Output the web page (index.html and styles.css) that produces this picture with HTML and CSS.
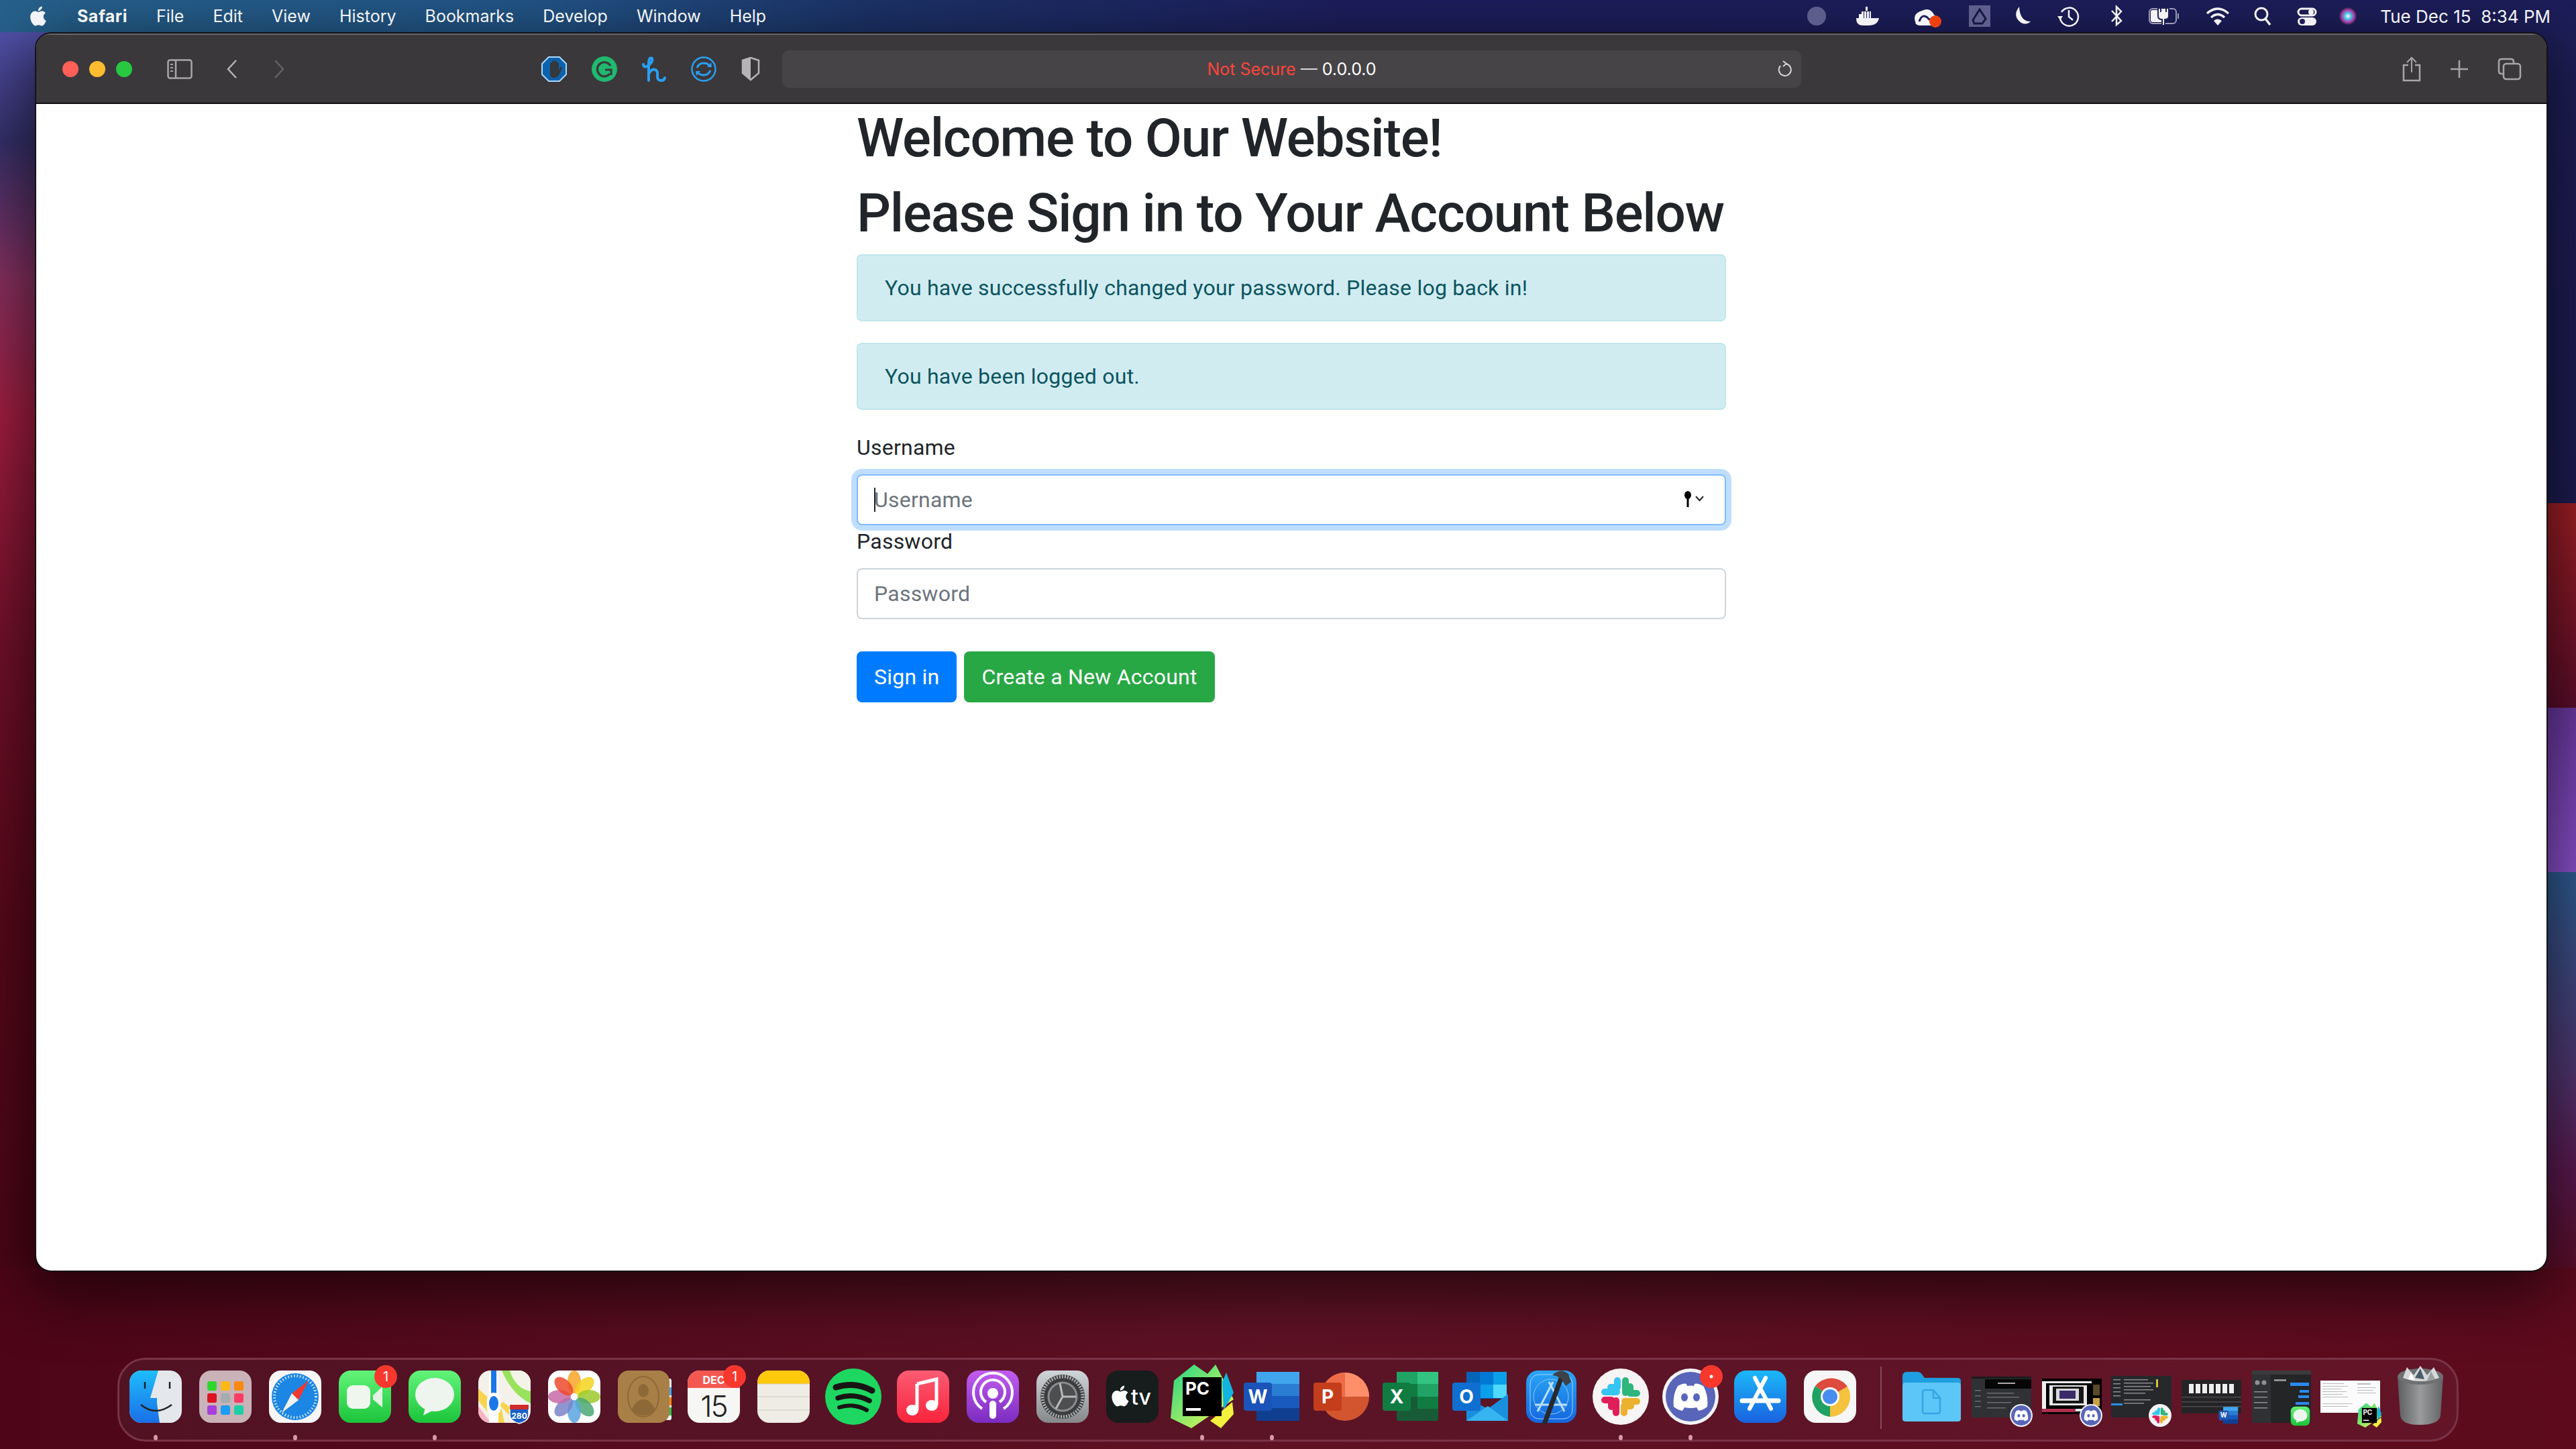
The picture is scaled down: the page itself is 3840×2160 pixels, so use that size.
FILE: index.html
```html
<!DOCTYPE html>
<html lang="en">
<head>
  <meta charset="UTF-8" />
  <title>Safari - Sign in</title>
  <link rel="stylesheet" href="styles.css">
</head>
<body>

  <!-- shared gradients, clips and the app icons used more than once -->
  <svg class="defs" xmlns="http://www.w3.org/2000/svg">
    <defs>
      <clipPath id="sq"><rect x="13" y="13" width="78" height="78" rx="18"/></clipPath>
      <linearGradient id="g-green" x1="0" y1="0" x2="0" y2="1"><stop offset="0" stop-color="#63f47a"/><stop offset="1" stop-color="#1bc43a"/></linearGradient>
      <linearGradient id="g-finder" x1="0" y1="0" x2="0" y2="1"><stop offset="0" stop-color="#1ebdfb"/><stop offset="1" stop-color="#1a6fe8"/></linearGradient>
      <linearGradient id="g-music" x1="0" y1="0" x2="0" y2="1"><stop offset="0" stop-color="#fb5c74"/><stop offset="1" stop-color="#fa233b"/></linearGradient>
      <linearGradient id="g-pod" x1="0" y1="0" x2="0" y2="1"><stop offset="0" stop-color="#c25cf0"/><stop offset="1" stop-color="#7b2cbf"/></linearGradient>
      <linearGradient id="g-gray" x1="0" y1="0" x2="0" y2="1"><stop offset="0" stop-color="#cfd6da"/><stop offset="1" stop-color="#86888a"/></linearGradient>
      <linearGradient id="g-store" x1="0" y1="0" x2="0" y2="1"><stop offset="0" stop-color="#1bb8f8"/><stop offset="1" stop-color="#1a62e0"/></linearGradient>
      <linearGradient id="g-xcode" x1="0" y1="0" x2="0" y2="1"><stop offset="0" stop-color="#2aa6f5"/><stop offset="1" stop-color="#1565df"/></linearGradient>
      <linearGradient id="g-pc1" x1="0" y1="0" x2="1" y2="1"><stop offset="0" stop-color="#21d789"/><stop offset="1" stop-color="#fcf84a"/></linearGradient>
      <linearGradient id="g-trash" x1="0" y1="0" x2="1" y2="0"><stop offset="0" stop-color="#5c5d5f"/><stop offset=".5" stop-color="#9a9b9d"/><stop offset="1" stop-color="#626365"/></linearGradient>
      <radialGradient id="g-siri"><stop offset="0" stop-color="#ffffff"/><stop offset=".35" stop-color="#45c7e8"/><stop offset=".7" stop-color="#b03da8"/><stop offset="1" stop-color="#2b2350"/></radialGradient>

      <symbol id="ic-messages" viewBox="0 0 104 104">
        <rect x="13" y="13" width="78" height="78" rx="18" fill="url(#g-green)"/>
        <ellipse cx="52" cy="49" rx="29" ry="25" fill="#eef5ee"/>
        <path d="M38 68 L35 80 L50 72 Z" fill="#eef5ee"/>
      </symbol>
      <symbol id="ic-discord" viewBox="0 0 104 104">
        <circle cx="52" cy="52" r="42" fill="#f4f4f6"/>
        <circle cx="52" cy="52" r="37" fill="#5865b8"/>
        <path d="M33 36 Q42 31 46 33 L47 36 Q52 35 57 36 L58 33 Q62 31 71 36 Q79 50 77 67 Q71 72 64 73 L61 68 Q52 70 43 68 L40 73 Q33 72 27 67 Q25 50 33 36 Z" fill="#fff"/>
        <ellipse cx="43" cy="53" rx="5" ry="6" fill="#5865b8"/>
        <ellipse cx="61" cy="53" rx="5" ry="6" fill="#5865b8"/>
      </symbol>
      <symbol id="ic-slack" viewBox="0 0 104 104">
        <circle cx="52" cy="52" r="42" fill="#f6f4f4"/>
        <g fill="none" stroke-width="10" stroke-linecap="round">
          <path d="M47 28 V38 H37" stroke="#36c5f0" stroke-linejoin="round"/><path d="M28 45 H46" stroke="#36c5f0"/>
          <path d="M76 47 H66 V37" stroke="#2eb67d" stroke-linejoin="round"/><path d="M59 28 V46" stroke="#2eb67d"/>
          <path d="M57 76 V66 H67" stroke="#ecb22e" stroke-linejoin="round"/><path d="M76 59 H58" stroke="#ecb22e"/>
          <path d="M28 57 H38 V67" stroke="#e01e5a" stroke-linejoin="round"/><path d="M45 76 V58" stroke="#e01e5a"/>
        </g>
      </symbol>
      <symbol id="ic-word" viewBox="0 0 104 104">
        <rect x="29" y="15" width="64" height="19" fill="#41a5ee"/>
        <rect x="29" y="33" width="64" height="19" fill="#2b7cd3"/>
        <rect x="29" y="51" width="64" height="19" fill="#185abd"/>
        <rect x="29" y="69" width="64" height="19" fill="#103f91"/>
        <rect x="10" y="31" width="42" height="42" rx="4" fill="#1b54b8"/>
        <text x="31" y="62" class="office-letter">W</text>
      </symbol>
      <symbol id="ic-pycharm" viewBox="0 0 104 104">
        <path d="M5 84 L36 99 L99 56 L72 4 L60 18 L40 4 L10 28 Z" fill="url(#g-pc1)"/>
        <path d="M99 46 L88 16 L82 30 L84 72 Z" fill="#12b4e0"/>
        <path d="M64 88 L80 99 L99 78 L97 60 Z" fill="#f4f03e"/>
        <rect x="23" y="23" width="58" height="58" fill="#000"/>
        <text x="27" y="49" class="pc-letter">PC</text>
        <rect x="28" y="69" width="22" height="4" fill="#fff"/>
      </symbol>
    </defs>
  </svg>

  <header class="menubar">
    <nav class="menu-left">
      <svg class="apple" width="30" height="32" viewBox="2 1 20 22"><path fill="#f2f4f7" d="M18.71 19.5c-.83 1.24-1.71 2.45-3.05 2.47-1.34.03-1.77-.79-3.29-.79-1.53 0-2 .77-3.27.82-1.31.05-2.3-1.32-3.14-2.53C4.25 17 2.94 12.45 4.7 9.39c.87-1.52 2.43-2.48 4.12-2.51 1.28-.02 2.5.87 3.29.87.78 0 2.26-1.07 3.8-.91.65.03 2.47.26 3.64 1.98-.09.06-2.17 1.28-2.15 3.81.03 3.02 2.65 4.03 2.68 4.04-.03.07-.42 1.44-1.38 2.83M13 3.5c.73-.83 1.94-1.46 2.94-1.5.13 1.17-.34 2.35-1.04 3.19-.69.85-1.83 1.51-2.95 1.42-.15-1.15.41-2.35 1.05-3.11z"/></svg>
      <span class="menu-app">Safari</span>
      <span>File</span>
      <span>Edit</span>
      <span>View</span>
      <span>History</span>
      <span>Bookmarks</span>
      <span>Develop</span>
      <span>Window</span>
      <span>Help</span>
    </nav>
    <div class="menu-right">
      <svg width="74" height="48"><circle cx="37" cy="24" r="14" fill="#5d5d8c"/></svg>
      <svg width="76" height="48"><g fill="#f2f2f4"><rect x="36" y="10" width="3" height="6"/><rect x="30" y="17" width="14" height="10"/><rect x="26" y="21" width="4" height="6"/><path d="M22 27 H56 Q54 38 40 38 H32 Q22 38 22 27 Z"/></g><g fill="#1d1f5b"><rect x="33" y="17" width="1" height="10"/><rect x="37" y="17" width="1" height="10"/><rect x="41" y="17" width="1" height="10"/></g></svg>
      <svg width="104" height="48"><path d="M34 32 Q30 20 44 16 Q56 10 62 22 Q72 28 62 38 H42 Q34 38 34 32 Z" fill="#f4f4f6"/><path d="M40 32 Q44 20 52 26 Q56 32 62 28" fill="none" stroke="#1d1f5b" stroke-width="3"/><circle cx="64" cy="32" r="9" fill="#f0410d"/></svg>
      <svg width="52" height="48"><rect x="10" y="8" width="32" height="32" fill="#5f5f8e"/><path d="M26 14 L35 28 L30 35 H18 L16 30 Z" fill="none" stroke="#16183f" stroke-width="3"/></svg>
      <svg width="74" height="48"><path d="M33 10 Q22 24 36 34 Q44 38 50 32 Q34 32 33 10 Z" fill="#f2f2f4"/></svg>
      <svg width="66" height="48"><path d="M22 18 A13.500 13.500 0 1 1 20 26" fill="none" stroke="#f2f2f4" stroke-width="2.500"/><path d="M16 24 L24 24 L20 30 Z" fill="#f2f2f4"/><path d="M33 15 V25 L39 30" fill="none" stroke="#f2f2f4" stroke-width="2.500"/></svg>
      <svg width="76" height="48"><path d="M31 16 L45 31 L38 37 V10 L45 17 L31 32" fill="none" stroke="#f2f2f4" stroke-width="2.500"/></svg>
      <svg width="66" height="48"><rect x="11" y="13" width="40" height="22" rx="5" fill="none" stroke="#9b9bb8" stroke-width="2"/><rect x="13" y="15" width="22" height="18" rx="3" fill="#f2f2f4"/><rect x="53" y="20" width="2" height="8" fill="#9b9bb8"/><path d="M24 12 H40 V24 Q40 29 34 29 V38 H30 V29 Q24 29 24 24 Z M28 11 V18 M36 11 V18" fill="#f2f2f4" stroke="#1d1f5b" stroke-width="2"/></svg>
      <svg width="94" height="48"><g fill="none" stroke="#f2f2f4" stroke-width="3.500"><path d="M31 20 Q47 6 63 20"/><path d="M37 26 Q47 17 57 26"/></g><path d="M41 31 Q47 26 53 31 L47 38 Z" fill="#f2f2f4"/></svg>
      <svg width="40" height="48"><circle cx="18" cy="21" r="9" fill="none" stroke="#f2f2f4" stroke-width="3"/><path d="M24 28 L31 37" stroke="#f2f2f4" stroke-width="3.500"/></svg>
      <svg width="92" height="48"><rect x="33" y="13" width="26" height="10" rx="5" fill="none" stroke="#f2f2f4" stroke-width="3"/><circle cx="52" cy="18" r="4" fill="#f2f2f4"/><rect x="32" y="26" width="28" height="12" rx="6" fill="#f2f2f4"/><circle cx="39" cy="32" r="4" fill="#1d1f5b"/></svg>
      <svg width="30" height="48"><circle cx="15" cy="24" r="13" fill="url(#g-siri)"/></svg>
      <span class="clock">Tue Dec 15  8:34 PM</span>
    </div>
  </header>

  <main class="window">
    <div class="toolbar">
      <span class="light light-red"></span>
      <span class="light light-yellow"></span>
      <span class="light light-green"></span>
      <svg class="tb-sidebar" width="38" height="30" viewBox="0 0 38 30"><rect x="1.500" y="1.500" width="35" height="27" rx="3" fill="none" stroke="#a8a6a8" stroke-width="2.500"/><path d="M13 2 V28" stroke="#a8a6a8" stroke-width="2.500"/><path d="M5 8 H9 M5 13 H9 M5 18 H9" stroke="#a8a6a8" stroke-width="2"/></svg>
      <svg class="tb-back" width="18" height="30" viewBox="0 0 18 30"><path d="M15 2 L3 15 L15 28" fill="none" stroke="#b4b2b4" stroke-width="2.500"/></svg>
      <svg class="tb-forward" width="18" height="30" viewBox="0 0 18 30"><path d="M3 2 L15 15 L3 28" fill="none" stroke="#646264" stroke-width="2.500"/></svg>

      <svg class="ext ext-first" width="38" height="38" viewBox="0 0 38 38"><path d="M11 1 H27 L37 11 V27 L27 37 H11 L1 27 V11 Z" fill="#0d62ad" stroke="#a9d8f7" stroke-width="2"/><path d="M13 20 V11 Q13 9 14.500 9 Q16 9 16 11 V8 Q16 6 17.500 6 Q19 6 19.500 8 Q20 6 21.500 6 Q23 6 23 8 V10 Q23 9 24.500 9 Q26 9 26 11 V20 L29 16 Q31 15 31 18 L26 28 Q24 32 19 32 Q13 32 13 26 Z" fill="#35383c"/></svg>
      <svg class="ext" width="38" height="38" viewBox="0 0 38 38"><circle cx="19" cy="19" r="19" fill="#1fb96f"/><path d="M28 14 A10.500 10.500 0 1 0 27 26 M20 20 H29 V28" fill="none" stroke="#3a383b" stroke-width="3.200"/></svg>
      <svg class="ext" width="36" height="38" viewBox="0 0 36 38"><path d="M2 12 Q3 18 9 14 Q17 8 15 3 Q10 0 10 12 L10 36 M10 26 Q14 18 20 20 Q24 22 23 28 Q22 36 29 36 Q33 36 34 32" fill="none" stroke="#2a9ff2" stroke-width="4" stroke-linecap="round"/></svg>
      <svg class="ext" width="38" height="38" viewBox="0 0 38 38"><circle cx="19" cy="19" r="17.500" fill="none" stroke="#2a9ff2" stroke-width="2.500"/><path d="M9 17 Q12 10 19 10 Q24 10 27 13 M29 21 Q26 28 19 28 Q14 28 11 25" fill="none" stroke="#2a9ff2" stroke-width="3"/><path d="M24 16 L31 16 L30 9 Z M14 22 L7 22 L8 29 Z" fill="#2a9ff2"/></svg>
      <svg class="ext" width="28" height="36" viewBox="0 0 28 36"><path d="M14 1 L26 5 V24 L14 34 L2 24 V5 Z" fill="none" stroke="#b6b4b7" stroke-width="2.500"/><path d="M14 1 L2 5 V24 L14 34 Z" fill="#b6b4b7"/></svg>

      <div class="address">
        <span class="address-text"><span class="address-warn">Not Secure</span><span class="address-dash"> — </span>0.0.0.0</span>
        <svg class="reload" width="24" height="28" viewBox="0 0 24 28"><path d="M15 6 A9 9 0 1 1 7 9" fill="none" stroke="#d8d6d8" stroke-width="2"/><path d="M11 2 L16 6 L11 10" fill="none" stroke="#d8d6d8" stroke-width="2"/></svg>
      </div>

      <svg class="tb-share" width="30" height="38" viewBox="0 0 30 38"><path d="M10 13 H3 V36 H27 V13 H20" fill="none" stroke="#a8a6a8" stroke-width="2.500"/><path d="M15 24 V2 M8 9 L15 2 L22 9" fill="none" stroke="#a8a6a8" stroke-width="2"/></svg>
      <svg class="tb-plus" width="28" height="28" viewBox="0 0 28 28"><path d="M14 1 V27 M1 14 H27" stroke="#a8a6a8" stroke-width="2.500"/></svg>
      <svg class="tb-tabs" width="36" height="34" viewBox="0 0 36 34"><rect x="9" y="9" width="25" height="23" rx="4" fill="none" stroke="#a8a6a8" stroke-width="2.500"/><path d="M9 24 H6 Q2 24 2 20 V6 Q2 2 6 2 H20 Q24 2 24 6 V9" fill="none" stroke="#a8a6a8" stroke-width="2.500"/></svg>
    </div>

    <div class="page">
      <div class="content">
        <h1>Welcome to Our Website!</h1>
        <h1>Please Sign in to Your Account Below</h1>
        <div class="alert">You have successfully changed your password. Please log back in!</div>
        <div class="alert">You have been logged out.</div>
        <form>
          <label for="username">Username</label>
          <div class="field">
            <input class="form-control is-focused" id="username" type="text" placeholder="Username">
            <span class="caret"></span>
            <svg class="keychain" width="32" height="26" viewBox="0 0 32 26"><ellipse cx="6" cy="7" rx="5" ry="6" fill="#000"/><path d="M6 12 V25" stroke="#000" stroke-width="3"/><path d="M18 9 L23.500 15 L29 9" fill="none" stroke="#222" stroke-width="2"/></svg>
          </div>
          <label for="password">Password</label>
          <input class="form-control" id="password" type="password" placeholder="Password">
          <div class="buttons">
            <button class="btn btn-primary" type="button">Sign in</button>
            <button class="btn btn-success" type="button">Create a New Account</button>
          </div>
        </form>
      </div>
    </div>
  </main>

  <footer class="dock">
    <div class="dock-item has-dot"><svg width="104" height="104" viewBox="0 0 104 104"><g clip-path="url(#sq)"><rect x="13" y="13" width="78" height="78" fill="#e4e8ec"/><path d="M13 13 H56 Q48 40 44 54 H54 V62 Q56 76 58 91 H13 Z" fill="url(#g-finder)"/></g><path d="M36 30 V40 M73 30 V40" stroke="#222" stroke-width="2.500"/><path d="M30 64 Q52 82 76 64" fill="none" stroke="#222" stroke-width="2.500"/></svg></div>
    <div class="dock-item"><svg width="104" height="104" viewBox="0 0 104 104"><rect x="13" y="13" width="78" height="78" rx="18" fill="#c9b3b8"/><rect x="25" y="29" width="14" height="14" rx="3" fill="#2fd62f"/><rect x="45" y="29" width="14" height="14" rx="3" fill="#fdb913"/><rect x="65" y="29" width="14" height="14" rx="3" fill="#f78a0f"/><rect x="25" y="47" width="14" height="14" rx="3" fill="#dc1420"/><rect x="45" y="47" width="14" height="14" rx="3" fill="#a4acb0"/><rect x="65" y="47" width="14" height="14" rx="3" fill="#fa3c64"/><rect x="25" y="65" width="14" height="14" rx="3" fill="#a63fdc"/><rect x="45" y="65" width="14" height="14" rx="3" fill="#1b9cf5"/><rect x="65" y="65" width="14" height="14" rx="3" fill="#1ccfa4"/></svg></div>
    <div class="dock-item has-dot"><svg width="104" height="104" viewBox="0 0 104 104"><rect x="13" y="13" width="78" height="78" rx="18" fill="#f6f6f6"/><circle cx="52" cy="52" r="35" fill="#1c86e4"/><circle cx="52" cy="52" r="31" fill="none" stroke="#d6ecfb" stroke-width="4" stroke-dasharray="1.500 3"/><path d="M72 28 L57 57 L47 47 Z" fill="#f0392b"/><path d="M32 76 L47 47 L57 57 Z" fill="#f2f2f2"/></svg></div>
    <div class="dock-item"><svg width="104" height="104" viewBox="0 0 104 104"><rect x="13" y="13" width="78" height="78" rx="18" fill="url(#g-green)"/><rect x="25" y="35" width="35" height="35" rx="9" fill="#eef6ee"/><path d="M64 50 L78 37 V68 L64 56 Z" fill="#e4f2e4"/><circle cx="83" cy="22" r="17" fill="#f8382d"/><text x="83" y="29" class="badge-text">1</text></svg></div>
    <div class="dock-item has-dot"><svg width="104" height="104"><use href="#ic-messages" width="104" height="104"/></svg></div>
    <div class="dock-item"><svg width="104" height="104" viewBox="0 0 104 104"><g clip-path="url(#sq)"><rect x="13" y="13" width="78" height="78" fill="#f4f1ea"/><path d="M48 13 H91 V62 Q64 50 48 13 Z" fill="#98e25c"/><path d="M60 13 H91 V44 Q68 40 60 13 Z" fill="#f3f3e8"/><path d="M13 40 L48 72 L52 91 H40 L13 58 Z" fill="#f9d54e"/><path d="M13 66 L32 91 H13 Z" fill="#f7b4c2"/><path d="M50 60 L91 91 H70 L44 64 Z" fill="#f9d54e"/><rect x="29" y="13" width="14" height="78" fill="#fff"/><rect x="32" y="13" width="8" height="38" fill="#1a77e6"/><rect x="26" y="46" width="20" height="34" rx="10" fill="#fff"/><ellipse cx="36" cy="62" rx="7" ry="11" fill="#1a77e6"/></g><path d="M60 64 H88 V80 Q88 88 74 92 Q60 88 60 80 Z" fill="#1a61c7" stroke="#fff" stroke-width="1.500"/><rect x="60" y="64" width="28" height="7" fill="#cf2b2b"/><text x="74" y="85" class="maps-shield">280</text></svg></div>
    <div class="dock-item"><svg width="104" height="104" viewBox="0 0 104 104"><rect x="13" y="13" width="78" height="78" rx="18" fill="#fff"/><g transform="translate(52 52)" fill-opacity=".85"><ellipse cy="-22" rx="10" ry="17" fill="#f7a428"/><ellipse cy="-22" rx="10" ry="17" fill="#f4d21e" transform="rotate(45)"/><ellipse cy="-22" rx="10" ry="17" fill="#9cc92d" transform="rotate(90)"/><ellipse cy="-22" rx="10" ry="17" fill="#4aa873" transform="rotate(135)"/><ellipse cy="-22" rx="10" ry="17" fill="#5ba5e0" transform="rotate(180)"/><ellipse cy="-22" rx="10" ry="17" fill="#7a82c8" transform="rotate(225)"/><ellipse cy="-22" rx="10" ry="17" fill="#c76aa8" transform="rotate(270)"/><ellipse cy="-22" rx="10" ry="17" fill="#ee4a2c" transform="rotate(315)"/></g></svg></div>
    <div class="dock-item"><svg width="104" height="104" viewBox="0 0 104 104"><rect x="84" y="25" width="9" height="62" rx="3" fill="#f2f2f2"/><rect x="86" y="38" width="7" height="12" fill="#3fa9f5"/><rect x="86" y="53" width="7" height="12" fill="#f78a0f"/><rect x="86" y="68" width="7" height="12" fill="#2fc04a"/><rect x="13" y="13" width="77" height="78" rx="16" fill="#a97f48"/><ellipse cx="51" cy="52" rx="23" ry="30" fill="none" stroke="#8d6938" stroke-width="2"/><ellipse cx="51" cy="43" rx="8" ry="10" fill="#8d6938"/><path d="M33 72 Q40 56 51 56 Q62 56 69 72 Q51 88 33 72 Z" fill="#8d6938"/></svg></div>
    <div class="dock-item"><svg width="104" height="104" viewBox="0 0 104 104"><g clip-path="url(#sq)"><rect x="13" y="13" width="78" height="78" fill="#f6f6f4"/><rect x="13" y="13" width="78" height="26" fill="#f25850"/></g><text x="52" y="33" class="cal-month">DEC</text><text x="52" y="82" class="cal-day">15</text><circle cx="83" cy="22" r="17" fill="#f8382d"/><text x="83" y="29" class="badge-text">1</text></svg></div>
    <div class="dock-item"><svg width="104" height="104" viewBox="0 0 104 104"><g clip-path="url(#sq)"><rect x="13" y="13" width="78" height="78" fill="#eeece4"/><rect x="13" y="13" width="78" height="20" fill="#fec90a"/><path d="M13 33 H91" stroke="#cfcdc4" stroke-width="2" stroke-dasharray="1.500 2"/><path d="M13 52 H91 M13 72 H91" stroke="#d8d6cf" stroke-width="1.500"/></g></svg></div>
    <div class="dock-item"><svg width="104" height="104" viewBox="0 0 104 104"><circle cx="52" cy="52" r="42" fill="#1ed760"/><g fill="none" stroke="#191414" stroke-linecap="round"><path d="M26 38 Q54 29 80 43" stroke-width="9"/><path d="M29 54 Q53 46 76 58" stroke-width="7.500"/><path d="M31 68 Q52 61 72 72" stroke-width="6"/></g></svg></div>
    <div class="dock-item"><svg width="104" height="104" viewBox="0 0 104 104"><rect x="13" y="13" width="78" height="78" rx="18" fill="url(#g-music)"/><path d="M43 33 L72 26 V65 M43 33 V72" fill="none" stroke="#fff" stroke-width="5"/><ellipse cx="36" cy="72" rx="9" ry="8" fill="#fff"/><ellipse cx="65" cy="65" rx="9" ry="8" fill="#fff"/></svg></div>
    <div class="dock-item"><svg width="104" height="104" viewBox="0 0 104 104"><rect x="13" y="13" width="78" height="78" rx="18" fill="url(#g-pod)"/><g fill="none" stroke="#fff" stroke-width="4"><path d="M36 70 A29 29 0 1 1 68 70"/><path d="M42 60 A18 18 0 1 1 62 60"/></g><circle cx="52" cy="47" r="8" fill="#fff"/><rect x="47" y="58" width="10" height="27" rx="5" fill="#fff"/></svg></div>
    <div class="dock-item"><svg width="104" height="104" viewBox="0 0 104 104"><rect x="13" y="13" width="78" height="78" rx="18" fill="url(#g-gray)"/><circle cx="52" cy="52" r="33" fill="#3c3d3f"/><circle cx="52" cy="52" r="30" fill="none" stroke="#b0b2b4" stroke-width="5" stroke-dasharray="2 2"/><circle cx="52" cy="52" r="21" fill="#4d4e50" stroke="#8a8c8e" stroke-width="3"/><path d="M52 52 L48 32 M52 52 L72 52 M52 52 L42 70" stroke="#b8babc" stroke-width="3"/></svg></div>
    <div class="dock-item"><svg width="104" height="104" viewBox="0 0 104 104"><rect x="13" y="13" width="78" height="78" rx="18" fill="#171c1c"/><svg x="19" y="34" width="30" height="34" viewBox="3 1 18 22"><path fill="#fff" d="M18.71 19.5c-.83 1.24-1.71 2.45-3.05 2.47-1.34.03-1.77-.79-3.29-.79-1.53 0-2 .77-3.27.82-1.31.05-2.3-1.32-3.14-2.53C4.25 17 2.94 12.45 4.7 9.39c.87-1.52 2.43-2.48 4.12-2.51 1.28-.02 2.5.87 3.29.87.78 0 2.26-1.07 3.8-.91.65.03 2.47.26 3.64 1.98-.09.06-2.17 1.28-2.15 3.81.03 3.02 2.65 4.03 2.68 4.04-.03.07-.42 1.44-1.38 2.83M13 3.5c.73-.83 1.94-1.46 2.94-1.5.13 1.17-.34 2.35-1.04 3.19-.69.85-1.83 1.51-2.95 1.42-.15-1.15.41-2.35 1.05-3.11z"/></svg><text x="50" y="64" class="tv-text">tv</text></svg></div>
    <div class="dock-item has-dot"><svg width="104" height="104"><use href="#ic-pycharm" width="104" height="104"/></svg></div>
    <div class="dock-item has-dot"><svg width="104" height="104"><use href="#ic-word" width="104" height="104"/></svg></div>
    <div class="dock-item"><svg width="104" height="104" viewBox="0 0 104 104"><circle cx="57" cy="52" r="36" fill="#d2552f"/><path d="M57 16 A36 36 0 0 1 93 52 H57 Z" fill="#ff8f6b"/><path d="M57 16 A36 36 0 0 0 26 34 V52 H57 Z" fill="#ed6c47"/><rect x="10" y="31" width="42" height="42" rx="4" fill="#c43e1c"/><text x="31" y="62" class="office-letter">P</text></svg></div>
    <div class="dock-item"><svg width="104" height="104" viewBox="0 0 104 104"><rect x="30" y="15" width="62" height="73" rx="3" fill="#185c37"/><rect x="30" y="15" width="31" height="18" fill="#21a366"/><rect x="61" y="15" width="31" height="18" fill="#33c481"/><rect x="30" y="33" width="31" height="19" fill="#107c41"/><rect x="61" y="33" width="31" height="19" fill="#21a366"/><rect x="61" y="52" width="31" height="18" fill="#107c41"/><rect x="9" y="31" width="42" height="42" rx="4" fill="#107c41"/><text x="30" y="62" class="office-letter">X</text></svg></div>
    <div class="dock-item"><svg width="104" height="104" viewBox="0 0 104 104"><rect x="30" y="15" width="58" height="40" fill="#0364b8"/><rect x="50" y="15" width="20" height="19" fill="#0078d4"/><rect x="70" y="15" width="20" height="19" fill="#0a9fe8"/><rect x="50" y="34" width="20" height="20" fill="#0a9fe8"/><rect x="70" y="34" width="20" height="20" fill="#50d9ff"/><path d="M30 54 L62 70 L92 48 V88 H30 Z" fill="#1a8fde"/><path d="M30 88 L62 66 L92 88 Z" fill="#35b4f0"/><rect x="9" y="31" width="42" height="42" rx="4" fill="#0f6fd1"/><text x="30" y="62" class="office-letter">O</text></svg></div>
    <div class="dock-item"><svg width="104" height="104" viewBox="0 0 104 104"><rect x="15" y="13" width="75" height="78" rx="18" fill="url(#g-xcode)"/><rect x="21" y="19" width="63" height="66" rx="13" fill="none" stroke="#9fd3f9" stroke-width="1"/><circle cx="52" cy="52" r="26" fill="none" stroke="#8cc8f6" stroke-width="1"/><path d="M32 74 L55 30 M72 74 L49 30 M28 64 H76" stroke="#b9dffb" stroke-width="3" fill="none"/><path d="M42 93 L68 22" stroke="#27292d" stroke-width="7"/><path d="M54 20 Q66 8 78 18 L82 30 L74 36 L68 26 Q60 20 54 20 Z" fill="#3e4146"/></svg></div>
    <div class="dock-item has-dot"><svg width="104" height="104"><use href="#ic-slack" width="104" height="104"/></svg></div>
    <div class="dock-item has-dot"><svg width="104" height="104"><use href="#ic-discord" width="104" height="104"/><circle cx="83" cy="22" r="17" fill="#f8382d"/><circle cx="83" cy="22" r="2.500" fill="#fff"/></svg></div>
    <div class="dock-item"><svg width="104" height="104" viewBox="0 0 104 104"><rect x="13" y="13" width="78" height="78" rx="18" fill="url(#g-store)"/><path d="M60 24 L36 70 M44 24 L68 70" stroke="#fff" stroke-width="6" stroke-linecap="round"/><path d="M25 58 H79" stroke="#fff" stroke-width="7" stroke-linecap="round"/></svg></div>
    <div class="dock-item"><svg width="104" height="104" viewBox="0 0 104 104"><rect x="13" y="13" width="78" height="78" rx="18" fill="#f6f6f6"/><path d="M52 52 L30 36 A30 30 0 0 1 78 37 Z" fill="#dd4b3e"/><path d="M52 52 L78 37 A30 30 0 0 1 52 82 Z" fill="#f4c23c"/><path d="M52 52 L52 82 A30 30 0 0 1 30 36 Z" fill="#1fa262"/><circle cx="52" cy="52" r="14" fill="#fff"/><circle cx="52" cy="52" r="11" fill="#4a8df0"/></svg></div>

    <div class="dock-divider"></div>

    <div class="dock-item"><svg width="104" height="104" viewBox="0 0 104 104"><path d="M8 22 Q8 15 15 15 H30 Q35 15 38 20 L41 24 H90 Q95 24 95 29 V40 H8 Z" fill="#1f9fe0"/><path d="M8 36 Q8 31 13 31 H90 Q95 31 95 36 V85 Q95 89 90 89 H13 Q8 89 8 85 Z" fill="#5cc6f8"/><path d="M42 42 H54 L64 54 V74 Q64 77 60 77 H42 Q38 77 38 74 V46 Q38 42 42 42 Z M54 42 V54 H64" fill="none" stroke="#37a4e4" stroke-width="2.500"/></svg></div>
    <div class="dock-item"><svg width="104" height="104" viewBox="0 0 104 104"><rect x="7" y="22" width="89" height="61" fill="#2f3134"/><rect x="7" y="22" width="89" height="3" fill="#1a1a1c"/><rect x="27" y="26" width="69" height="14" fill="#060607"/><rect x="46" y="31" width="26" height="2" fill="#aaa"/><g fill="#6a6c70"><rect x="12" y="42" width="9" height="1.500"/><rect x="12" y="50" width="9" height="1.500"/><rect x="12" y="58" width="9" height="1.500"/><rect x="12" y="66" width="9" height="1.500"/><rect x="30" y="46" width="40" height="1.500"/><rect x="30" y="52" width="48" height="1.500"/><rect x="30" y="60" width="36" height="1.500"/><rect x="30" y="68" width="28" height="1.500"/></g><use href="#ic-discord" x="60" y="59" width="42" height="42"/></svg></div>
    <div class="dock-item"><svg width="104" height="104" viewBox="0 0 104 104"><rect x="8" y="25" width="89" height="53" fill="#000"/><rect x="8" y="29" width="74" height="45" fill="#f0f0f0"/><rect x="14" y="32" width="68" height="38" fill="#000"/><rect x="19" y="35" width="56" height="30" fill="#e8e8e8"/><rect x="24" y="37" width="46" height="25" fill="#161618"/><rect x="29" y="40" width="34" height="18" fill="#d8d8d8"/><rect x="34" y="43" width="24" height="12" fill="#3a2a6a"/><rect x="84" y="34" width="10" height="16" fill="#5a4a2a"/><rect x="84" y="54" width="10" height="12" fill="#c8a040"/><rect x="8" y="70" width="50" height="5" fill="#b03050"/><use href="#ic-discord" x="60" y="59" width="42" height="42"/></svg></div>
    <div class="dock-item"><svg width="104" height="104" viewBox="0 0 104 104"><rect x="7" y="21" width="90" height="62" fill="#26282b"/><g fill="#8a8c90"><rect x="10" y="26" width="11" height="1.500"/><rect x="10" y="32" width="11" height="1.500"/><rect x="10" y="38" width="11" height="1.500"/><rect x="10" y="44" width="11" height="1.500"/><rect x="10" y="50" width="11" height="1.500"/><rect x="26" y="26" width="36" height="1.500"/><rect x="26" y="31" width="44" height="1.500"/><rect x="26" y="36" width="40" height="1.500"/><rect x="26" y="41" width="44" height="1.500"/><rect x="26" y="46" width="32" height="1.500"/><rect x="26" y="56" width="40" height="1.500"/><rect x="26" y="61" width="30" height="1.500"/></g><rect x="7" y="62" width="17" height="3" fill="#2a8fe6"/><rect x="74" y="26" width="3" height="12" fill="#d8c040"/><use href="#ic-slack" x="59" y="59" width="42" height="42"/></svg></div>
    <div class="dock-item"><svg width="104" height="104" viewBox="0 0 104 104"><rect x="8" y="27" width="89" height="50" fill="#242426"/><g fill="#eeeeee"><rect x="19" y="33" width="7" height="14"/><rect x="29" y="33" width="7" height="14"/><rect x="39" y="33" width="7" height="14"/><rect x="49" y="33" width="7" height="14"/><rect x="59" y="33" width="7" height="14"/><rect x="69" y="33" width="7" height="14"/><rect x="79" y="33" width="7" height="14"/></g><g fill="#4a4a4c"><rect x="8" y="52" width="89" height="1.500"/><rect x="8" y="59" width="89" height="1.500"/><rect x="8" y="66" width="89" height="1.500"/></g><use href="#ic-word" x="60" y="62" width="36" height="36"/></svg></div>
    <div class="dock-item"><svg width="104" height="104" viewBox="0 0 104 104"><rect x="9" y="13" width="88" height="78" fill="#242527"/><rect x="9" y="13" width="88" height="6" fill="#3a3b3d"/><rect x="9" y="19" width="28" height="72" fill="#303134"/><g fill="#8f8f92"><circle cx="17" cy="31" r="3.500"/><circle cx="27" cy="31" r="3.500"/><rect x="12" y="44" width="20" height="1.500"/><rect x="12" y="52" width="20" height="1.500"/><rect x="12" y="60" width="20" height="1.500"/><rect x="12" y="68" width="20" height="1.500"/><rect x="42" y="26" width="18" height="3"/></g><g fill="#2a8af0"><rect x="66" y="31" width="28" height="5"/><rect x="80" y="42" width="14" height="4"/><rect x="78" y="50" width="16" height="4"/><rect x="74" y="60" width="20" height="4"/></g><use href="#ic-messages" x="62" y="62" width="38" height="38"/></svg></div>
    <div class="dock-item"><svg width="104" height="104" viewBox="0 0 104 104"><rect x="7" y="28" width="89" height="48" fill="#fbfbfb"/><g fill="#b8bcc0"><rect x="10" y="32" width="32" height="1"/><rect x="10" y="36" width="38" height="1"/><rect x="10" y="40" width="28" height="1"/><rect x="10" y="44" width="36" height="1"/><rect x="10" y="48" width="30" height="1"/><rect x="10" y="52" width="38" height="1"/><rect x="62" y="32" width="20" height="2"/><rect x="62" y="38" width="28" height="1"/><rect x="62" y="42" width="24" height="1"/><rect x="62" y="46" width="28" height="1"/><rect x="10" y="62" width="45" height="1"/><rect x="10" y="66" width="38" height="1"/></g><use href="#ic-pycharm" x="60" y="59" width="40" height="42"/></svg></div>
    <div class="dock-item"><svg width="104" height="104" viewBox="0 0 104 104"><path d="M18 22 L22 80 Q24 94 50 94 Q80 94 82 80 L86 22 Z" fill="url(#g-trash)"/><ellipse cx="52" cy="22" rx="34" ry="12" fill="#6e7072"/><path d="M26 24 L32 8 L42 20 L52 6 L62 20 L72 8 L80 24 Q52 34 26 24 Z" fill="#d6d8da"/><path d="M44 24 L52 10 L58 26 Z" fill="#4a5a68"/><path d="M34 26 L38 16 L44 28 Z" fill="#fff"/><path d="M62 28 L68 14 L74 26 Z" fill="#9aa0a6"/></svg></div>
  </footer>

</body>
</html>
```

FILE: styles.css
```css
* {
  box-sizing: border-box;
}

html, body {
  margin: 0;
  height: 2160px;
  overflow: hidden;
}

body {
  width: 3840px;
  font-family: Inter, "Liberation Sans", sans-serif;
  background-color: #4e0518;
  background-image:
    linear-gradient(90deg, #4e0518, #5e1224 50%, #5c0a1c),
    linear-gradient(180deg, #5050a8 50px, #35306a 210px, #86305f 415px, #a01d3f 620px, #701028 965px, #560818 1380px, #4a0515 1900px),
    linear-gradient(180deg, #1e1f58 48px, #1c1b50 750px, #a01f25 750px, #5a0d2a 1055px, #6a38a0 1055px, #8a50cc 1300px, #2e5c92 1300px, #50356f 1600px, #5a1a50 1740px, #5a0818 1950px);
  background-size: 100% 270px, 50% 100%, 50% 100%;
  background-position: left bottom, left top, right top;
  background-repeat: no-repeat;
}

.defs {
  position: absolute;
  width: 0;
  height: 0;
}

/* menu bar */
.menubar {
  height: 48px;
  display: flex;
  justify-content: space-between;
  padding: 0 38px 0 42px;
  color: #f2f4f7;
  font-size: 25px;
  background: linear-gradient(90deg, #26618c, #225486 800px, #1c3268 1300px, #1d1e5c 2000px, #1d1e5a);
}

.menu-left {
  display: flex;
  align-items: center;
  gap: 43px;
}

.apple {
  margin-right: 0;
}

.menu-app {
  font-weight: 700;
  letter-spacing: .5px;
}

.menu-right {
  display: flex;
  align-items: center;
}

.clock {
  margin-left: 33px;
  font-size: 26px;
  white-space: pre;
}

/* safari window */
.window {
  width: 3742px;
  height: 1844px;
  margin: 2px 0 0 54px;
  border-radius: 22px;
  overflow: hidden;
  background: #fff;
  outline: 2px solid #141214;
  box-shadow: 0 24px 90px 10px rgba(0, 0, 0, .6);
  display: flex;
  flex-direction: column;
}

.toolbar {
  height: 105px;
  flex: none;
  display: flex;
  align-items: center;
  background: #3a383b;
  border-top: 2px solid #6a686a;
  border-bottom: 2px solid #0e0e0e;
  color: #fff;
}

.light {
  width: 24px;
  height: 24px;
  border-radius: 50%;
  margin-right: 16px;
}

.light-red {
  background: #ff5f57;
  margin-left: 39px;
}

.light-yellow {
  background: #febc2e;
}

.light-green {
  background: #28c840;
}

.tb-sidebar {
  margin-left: 36px;
}

.tb-back {
  margin-left: 50px;
}

.tb-forward {
  margin-left: 52px;
}

.ext {
  flex: none;
  margin-left: 37px;
}

.ext-first {
  margin-left: 382px;
}

.address {
  flex: none;
  position: relative;
  width: 1519px;
  height: 56px;
  margin-left: 33px;
  border-radius: 10px;
  background: #464447;
  display: flex;
  align-items: center;
  justify-content: center;
  font-size: 25px;
}

.address-text {
  white-space: pre;
}

.address-warn {
  color: #ff453a;
}

.address-dash {
  color: #d8d6d8;
}

.reload {
  position: absolute;
  right: 14px;
  top: 14px;
}

.tb-share {
  margin-left: 895px;
}

.tb-plus {
  margin-left: 42px;
}

.tb-tabs {
  margin-left: 43px;
}

/* page inside the browser */
.page {
  flex: 1;
  background: #fff;
  color: #212529;
}

.content {
  width: 1296px;
  margin-left: 1223px;
  font-family: Roboto, "Liberation Sans", sans-serif;
  font-size: 32px;
  line-height: 48px;
  letter-spacing: .23px;
}

h1 {
  margin: 0 0 13px;
  padding-top: 3px;
  font-size: 80px;
  line-height: 96px;
  font-weight: 500;
  letter-spacing: -1.2px;
  white-space: nowrap;
}

.alert {
  height: 100px;
  padding: 24px 40px;
  margin-bottom: 32px;
  border: 2px solid #bee5eb;
  border-radius: 8px;
  background: #d1ecf1;
  color: #0c5460;
}

label {
  display: block;
  margin-bottom: 16px;
}

.field {
  position: relative;
}

.form-control {
  display: block;
  width: 100%;
  height: 76px;
  padding: 12px 24px;
  border: 2px solid #ced4da;
  border-radius: 8px;
  font: inherit;
  letter-spacing: inherit;
  color: #495057;
  background: #fff;
  outline: none;
}

.form-control::placeholder {
  color: #6c757d;
  opacity: 1;
}

.is-focused {
  border-color: #80bdff;
  box-shadow: 0 0 0 8px rgba(0, 123, 255, .25);
}

.caret {
  position: absolute;
  left: 26px;
  top: 20px;
  width: 2px;
  height: 36px;
  background: #212529;
}

.keychain {
  position: absolute;
  right: 31px;
  top: 24px;
}

.buttons {
  display: flex;
  gap: 11px;
  margin-top: 48px;
}

.btn {
  height: 76px;
  padding: 12px 24px;
  border: 2px solid transparent;
  border-radius: 8px;
  color: #fff;
  font: inherit;
  letter-spacing: inherit;
}

.btn-primary {
  background: #007bff;
}

.btn-success {
  background: #28a745;
}

/* dock */
.dock {
  position: relative;
  width: 3490px;
  height: 125px;
  margin: 130px 0 0 175px;
  padding: 3px 2px 0;
  display: flex;
  border: 3px solid #7a3346;
  border-radius: 42px;
  background: linear-gradient(90deg, #511224, #5a1426 50%, #631527);
}

.dock-item {
  position: relative;
  flex: none;
  width: 104px;
  height: 104px;
}

.dock-item svg {
  display: block;
  overflow: visible;
}

.has-dot::after {
  content: "";
  position: absolute;
  left: 49px;
  top: 109px;
  width: 6px;
  height: 8px;
  border-radius: 50%;
  background: #d99aa8;
}

.dock-divider {
  flex: none;
  width: 2px;
  height: 93px;
  margin: 7px 23px 0;
  background: #8a4a5a;
}

/* text inside the dock icons */
.badge-text {
  font-size: 20px;
  fill: #fff;
  text-anchor: middle;
}

.office-letter {
  font-size: 28px;
  font-weight: 700;
  fill: #fff;
  text-anchor: middle;
}

.pc-letter {
  font-size: 26px;
  font-weight: 700;
  fill: #fff;
}

.maps-shield {
  font-size: 12px;
  font-weight: 700;
  fill: #fff;
  text-anchor: middle;
}

.cal-month {
  font-size: 16px;
  font-weight: 700;
  fill: #fff;
  text-anchor: middle;
}

.cal-day {
  font-size: 44px;
  font-weight: 300;
  fill: #222;
  text-anchor: middle;
  letter-spacing: -2px;
}

.tv-text {
  font-size: 32px;
  font-weight: 500;
  fill: #fff;
}
```
